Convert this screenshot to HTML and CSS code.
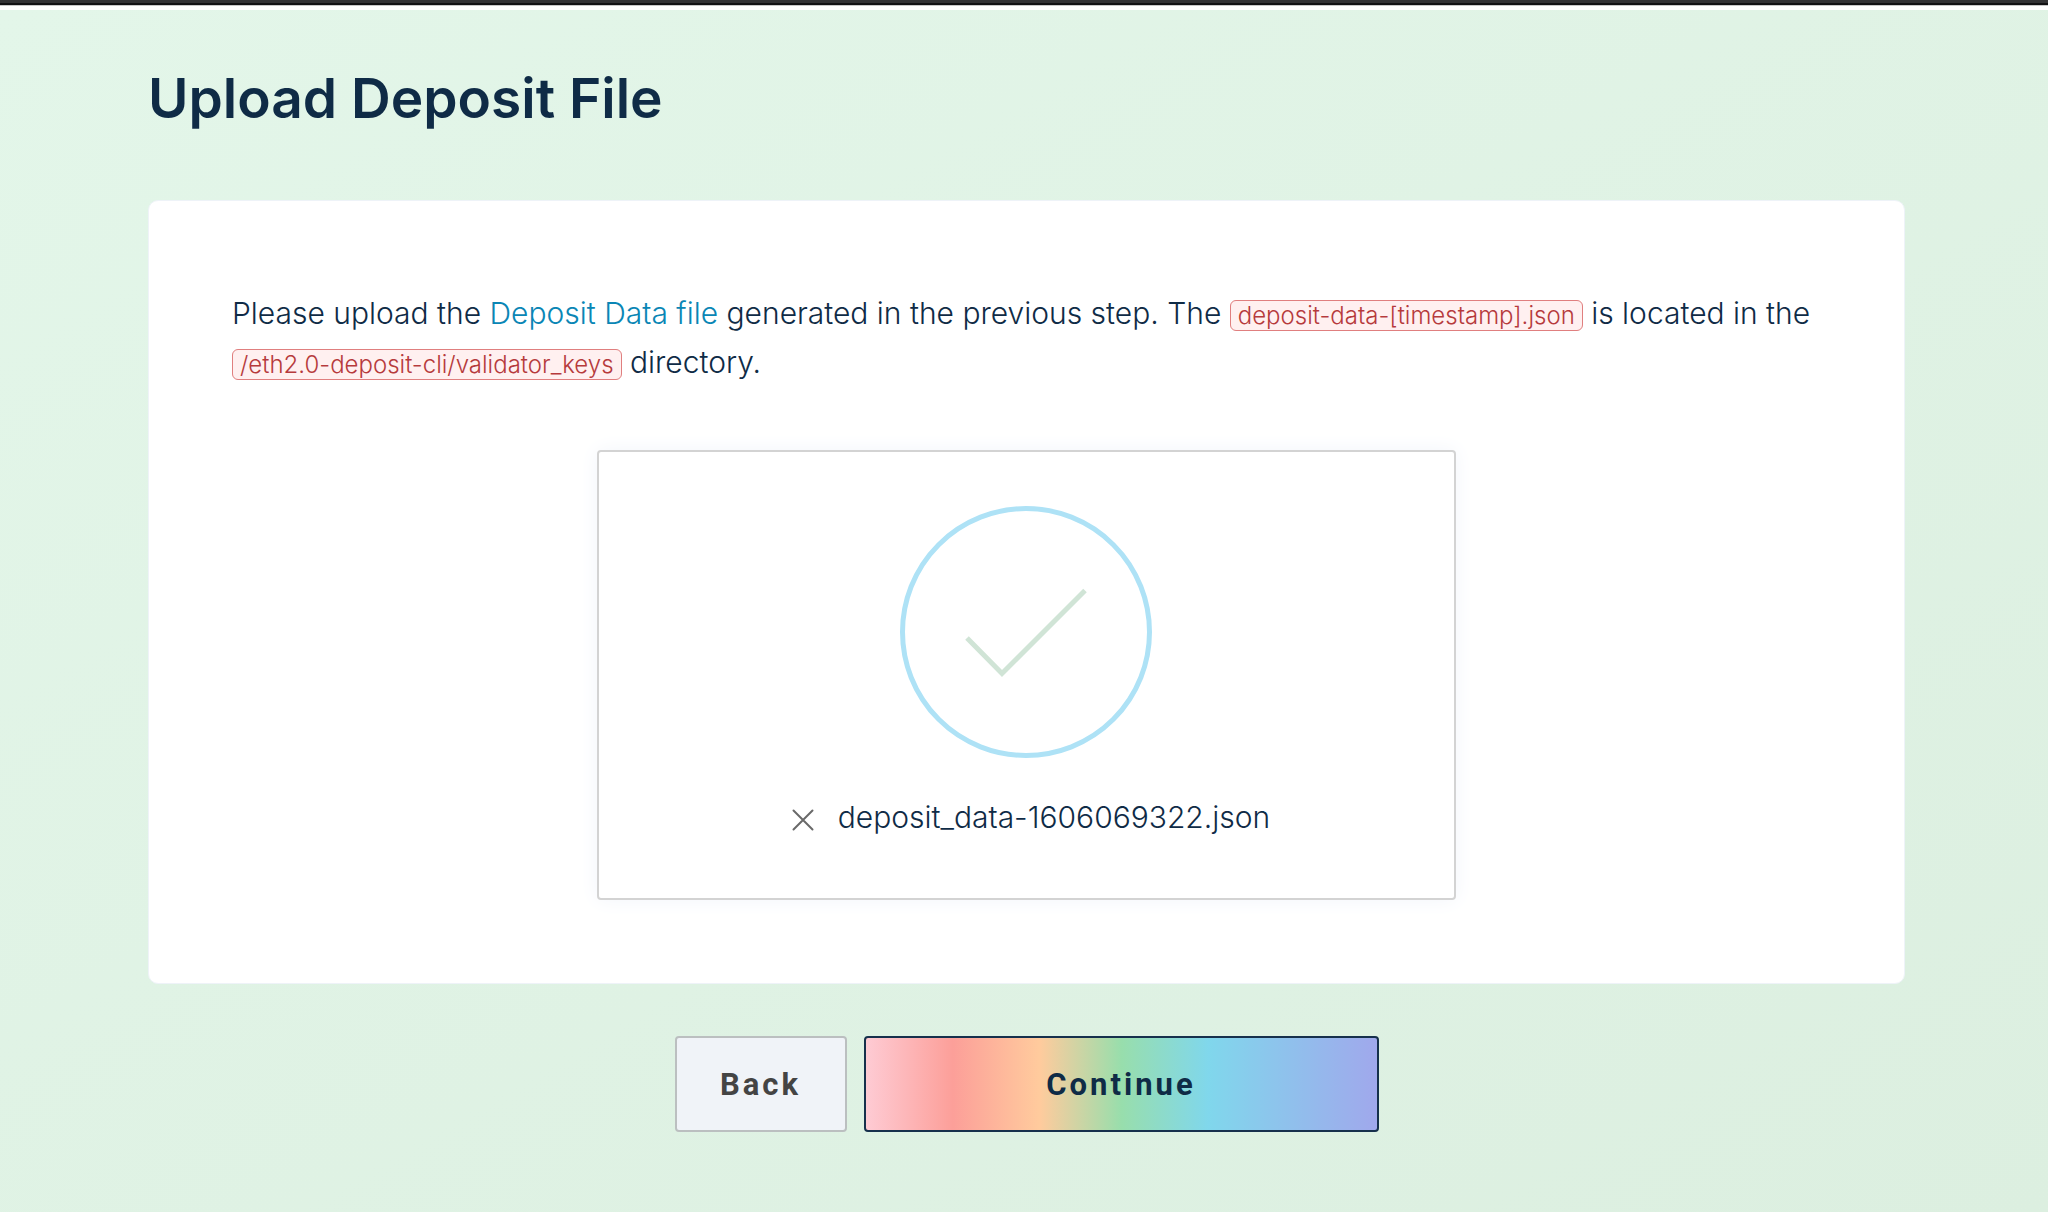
FILE: index.html
```html
<!DOCTYPE html>
<html lang="en">
<head>
    <meta charset="UTF-8">
    <meta name="viewport" content="width=device-width, initial-scale=1.0">
    <title>Upload Deposit File</title>
    <link rel="stylesheet" href="styles.css">
</head>
<body>

<header class="topbar"></header>

<main class="page">
    <h1>Upload Deposit File</h1>

    <section class="card">
        <p class="intro">
            Please upload the <a href="#">Deposit Data file</a> generated in the previous step. The
            <code>deposit-data-[timestamp].json</code> is located in the
            <code>/eth2.0-deposit-cli/validator_keys</code> directory.
        </p>

        <div class="dropzone">
            <svg class="check" viewBox="0 0 252 252" aria-hidden="true">
                <circle cx="126" cy="126" r="123.5" />
                <path d="M67 132 L102 167.5 L185 84.5" />
            </svg>
            <div class="file">
                <button type="button" class="remove" aria-label="Remove file">
                    <svg viewBox="0 0 24 24" aria-hidden="true">
                        <path d="M2.5 2.5 L21.5 21.5 M21.5 2.5 L2.5 21.5" />
                    </svg>
                </button>
                <span>deposit_data-1606069322.json</span>
            </div>
        </div>
    </section>

    <div class="actions">
        <button type="button" class="btn btn-back">Back</button>
        <button type="button" class="btn btn-continue">Continue</button>
    </div>
</main>

</body>
</html>
```
FILE: styles.css
```css
* {
    box-sizing: border-box;
}
body {
    display: flex;
    flex-direction: column;
    min-height: 100vh;
    margin: 0;
    font-family: Inter, sans-serif;
    font-size: 30px;
    font-weight: 300;
    line-height: 49px;
    color: #0f2b46;
}
.topbar {
    height: 10px;
    background: #fff;
    border-top: 3px solid #323234;
    box-shadow: inset 0 2px #111113, inset 0 3px #c8c8c8;
}
.page {
    flex: 1;
    padding: 56px 143px 80px 148px;
    background: linear-gradient(to bottom right, #e3f6e9, #dcefe0);
}
h1 {
    margin: 0 0 70px;
    font-size: 55px;
    font-weight: 600;
    line-height: 64px;
}
.card {
    padding: 88px 83px 83px;
    background: #fff;
    border: 1px solid #eef3f8;
    border-radius: 10px;
}
.intro {
    margin: 0 0 63px;
}
a {
    color: #0a86b5;
    text-decoration: none;
}
code {
    padding: 0 7px;
    font-family: inherit;
    font-size: 24px;
    line-height: 24px;
    color: #b63a3c;
    background: #fff0f0;
    border: 1px solid #e07f7f;
    border-radius: 6px;
}
.dropzone {
    display: flex;
    flex-direction: column;
    align-items: center;
    width: 54%;
    margin: 0 auto;
    padding: 54px 0 56px;
    border: 2px solid #d3d3d3;
    border-radius: 4px;
    box-shadow: 0 0 20px #f2f5fb;
}
.check {
    width: 252px;
    height: 252px;
    margin-bottom: 35px;
    fill: none;
    stroke-width: 5;
}
.check circle {
    stroke: #aee2f6;
}
.check path {
    stroke: #d0e4d6;
}
.file {
    display: flex;
    align-items: center;
    gap: 23px;
}
.remove {
    display: flex;
    padding: 4px 0 0 8px;
    background: none;
    border: 0;
    cursor: pointer;
}
.remove svg {
    width: 24px;
    height: 24px;
    stroke: #696969;
    stroke-width: 2;
    stroke-linecap: round;
}
.actions {
    display: flex;
    justify-content: center;
    gap: 17px;
    margin-top: 52px;
}
.btn {
    height: 96px;
    font-family: Roboto, sans-serif;
    font-size: 31px;
    font-weight: 700;
    letter-spacing: 3px;
    border-radius: 4px;
    cursor: pointer;
}
.btn-back {
    width: 172px;
    color: #444;
    background: #f0f3f8;
    border: 2px solid #bbbfc0;
}
.btn-continue {
    width: 515px;
    color: #0f2b46;
    background: linear-gradient(to right, #fecbd4 0%, #fc9f99 17%, #ffcb9d 34%, #98deac 50%, #80d7ec 67%, #a0a8ec 100%);
    border: 2px solid #16304c;
}
```
